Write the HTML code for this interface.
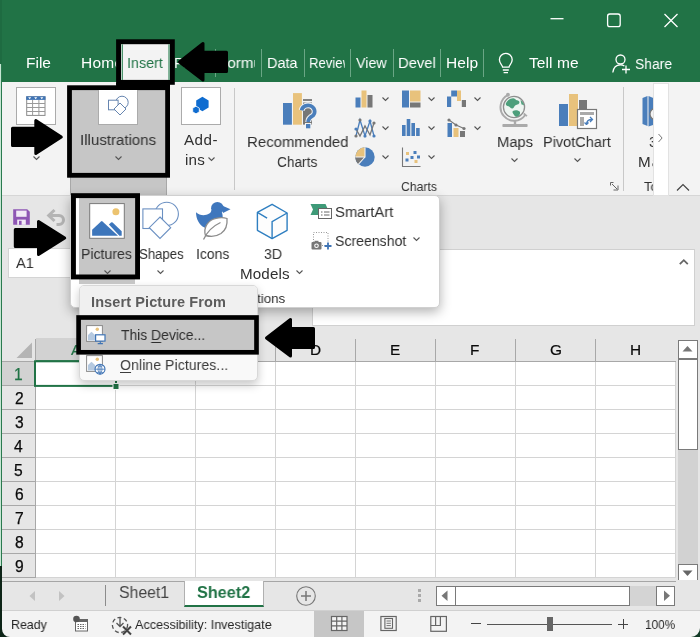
<!DOCTYPE html>
<html lang="en">
<head>
<meta charset="utf-8">
<title>Excel - Insert Picture From This Device</title>
<style>
html,body{margin:0;padding:0;}
body{width:700px;height:637px;overflow:hidden;background:#e6e6e6;font-family:"Liberation Sans",sans-serif;}
#app{position:relative;width:700px;height:637px;overflow:hidden;background:#e6e6e6;}
span.t{will-change:transform;transform-origin:0 0;}
#app div,#app span,#app svg{position:absolute;box-sizing:border-box;}
span.t{white-space:nowrap;display:block;}
span.t u{text-decoration:underline;text-underline-offset:2px;text-decoration-thickness:1px;}
.r{background:#000;}
.ibox{background:#fff;border:1px solid #ababab;}
.hl{background:#c6c6c6;border:5px solid #000;}
.sb{background:#fff;border:1px solid #7a7a7a;}
</style>
</head>
<body>

<div id="app">
<!-- title bar + tab row -->
<div style="left:0;top:0;width:700px;height:82px;background:#217346;"></div>
<!-- window buttons -->
<svg style="left:540px;top:6px" width="150" height="28" viewBox="0 0 150 28">
  <path d="M10.5 12.7h13" stroke="#fff" stroke-width="1.3" fill="none"/>
  <rect x="67.6" y="8" width="12.6" height="12.6" rx="2.2" fill="none" stroke="#fff" stroke-width="1.3"/>
  <path d="M124.5 8l13 13M137.500 8l-13 13" stroke="#fff" stroke-width="1.3" fill="none"/>
</svg>
<!-- tab separators -->
<div style="left:215px;top:48.500px;width:1px;height:28px;background:#6aa685;"></div>
<div style="left:261px;top:48.500px;width:1px;height:28px;background:#6aa685;"></div>
<div style="left:304.2px;top:48.500px;width:1px;height:28px;background:#6aa685;"></div>
<div style="left:350px;top:48.500px;width:1px;height:28px;background:#6aa685;"></div>
<div style="left:392.7px;top:48.500px;width:1px;height:28px;background:#6aa685;"></div>
<div style="left:440.2px;top:48.500px;width:1px;height:28px;background:#6aa685;"></div>
<div style="left:483.1px;top:48.500px;width:1px;height:28px;background:#6aa685;"></div>
<!-- lightbulb -->
<svg style="left:496px;top:51px" width="20" height="24" viewBox="0 0 20 24">
  <path d="M6.6 16.2c0-2.2-3.2-3.6-3.2-7.4a6.4 6.400 0 0 1 12.8 0c0 3.800-3.200 5.200-3.200 7.400z" fill="none" stroke="#fff" stroke-width="1.3"/>
  <path d="M6.800 19h6M7.600 21.600h4.400" stroke="#fff" stroke-width="1.3" fill="none"/>
</svg>
<!-- share icon -->
<svg style="left:611px;top:53px" width="22" height="22" viewBox="0 0 22 22">
  <circle cx="9.500" cy="6.500" r="4.500" fill="none" stroke="#fff" stroke-width="1.300"/>
  <path d="M1.800 19.500c0.600-4.800 3.800-7.600 7.700-7.600 1.500 0 2.800 0.400 3.900 1.100" fill="none" stroke="#fff" stroke-width="1.300"/>
  <path d="M15 12.500v8M11 16.500h8" stroke="#fff" stroke-width="1.300" fill="none"/>
</svg>

<!-- ribbon -->
<div style="left:0;top:82px;width:700px;height:114px;background:#f3f3f3;border-bottom:1px solid #d6d6d6;"></div>
<!-- table icon box -->
<div class="ibox" style="left:16px;top:87px;width:40px;height:38px;"></div>
<svg style="left:25px;top:95px" width="22" height="22" viewBox="0 0 22 22">
  <rect x="1.700" y="1.800" width="18.300" height="18.600" fill="#fff" stroke="#8a8a8a" stroke-width="1"/>
  <rect x="1.200" y="1.300" width="19.300" height="3.600" fill="#3f74b5"/>
  <path d="M1.700 8.500h18.300M1.700 12.500h18.300M1.700 16.500h18.300M7.600 5v15.400M13.900 5v15.400" stroke="#9a9a9a" stroke-width="1" fill="none"/>
  <path d="M3.200 2.300h3l-1.500 1.900zM9.200 2.300h3l-1.500 1.900zM15.300 2.300h3l-1.500 1.900z" fill="#fff"/>
</svg>
<svg style="left:32px;top:155px" width="9" height="6" viewBox="0 0 9 6"><path d="M1.500 1.500l3 3 3-3" fill="none" stroke="#555" stroke-width="1.100"/></svg>
<!-- add-ins box -->
<div class="ibox" style="left:181px;top:87px;width:40px;height:38px;"></div>
<svg style="left:190px;top:95px" width="22" height="22" viewBox="0 0 22 22">
  <path d="M12.400 1.800L18.600 5.400V12.600L12.400 16.200L6.200 12.600V5.400z" fill="#0f6cd0"/>
  <path d="M6 11.200L9.300 13.100V16.900L6 18.800L2.700 16.900V13.100z" fill="#0f6cd0" stroke="#fff" stroke-width="0.800"/>
</svg>
<svg style="left:207px;top:156px" width="9" height="6" viewBox="0 0 9 6"><path d="M1.500 1.500l3 3 3-3" fill="none" stroke="#555" stroke-width="1.100"/></svg>
<!-- ribbon separators -->
<div style="left:234px;top:88px;width:1px;height:102px;background:#c8c8c8;"></div>
<div style="left:623px;top:87px;width:1px;height:104px;background:#c8c8c8;"></div>
<!-- recommended charts icon -->
<svg style="left:281px;top:91px" width="40" height="40" viewBox="0 0 40 40">
  <rect x="2" y="12" width="8.900" height="21.700" fill="#4a7ebb"/>
  <rect x="12" y="2.100" width="8.900" height="31.600" fill="#e8c27c"/>
  <rect x="22" y="8.100" width="9" height="25.500" fill="#777"/>
  <rect x="22" y="9.900" width="9" height="1.600" fill="#f3f3f3"/>
  <path d="M20.600 19.300A6.600 6.200 0 1 1 32.300 24.300Q27.200 27 27.200 31" fill="none" stroke="#f3f3f3" stroke-width="5.800"/>
  <rect x="24" y="32" width="6.300" height="6.300" fill="#f3f3f3"/>
  <path d="M20.600 19.300A6.600 6.200 0 1 1 32.300 24.300Q27.200 27 27.200 31" fill="none" stroke="#4a7ebb" stroke-width="3.700"/>
  <rect x="25" y="33" width="4.300" height="4.300" fill="#4a7ebb"/>
</svg>
<!-- chart small icons col 1 -->
<svg style="left:354px;top:89px" width="22" height="20" viewBox="0 0 22 20">
  <rect x="1.500" y="8.500" width="5" height="10" fill="#4a7ebb"/><rect x="7.500" y="1.500" width="5" height="17" fill="#e8c27c"/><rect x="13.500" y="6" width="5" height="12.500" fill="#777"/>
</svg>
<svg style="left:353px;top:117px" width="24" height="22" viewBox="0 0 24 22">
  <path d="M3 19l4-16 5 16 5-15 4 15" fill="none" stroke="#4a7ebb" stroke-width="1.300"/>
  <path d="M3 12l4 7 5-10 5 9 4-12" fill="none" stroke="#777" stroke-width="1.300"/>
  <circle cx="3" cy="19" r="1.600" fill="#777"/><circle cx="7" cy="3" r="1.600" fill="#777"/><circle cx="12" cy="19" r="1.600" fill="#4a7ebb"/><circle cx="17" cy="4" r="1.600" fill="#4a7ebb"/><circle cx="21" cy="19" r="1.600" fill="#4a7ebb"/><circle cx="21" cy="6" r="1.600" fill="#777"/><circle cx="3" cy="12" r="1.600" fill="#4a7ebb"/>
</svg>
<svg style="left:354px;top:146px" width="22" height="22" viewBox="0 0 22 22">
  <circle cx="11" cy="11" r="9.700" fill="#4a7ebb"/>
  <path d="M11 11V1.300A9.700 9.700 0 0 0 1.300 11z" fill="#e8c27c"/>
  <path d="M11 11H1.300a9.700 9.700 0 0 0 3.200 7.200z" fill="#777"/>
  <path d="M11 1.300V11H1.300M11 11l-6.500 7.200" stroke="#f3f3f3" stroke-width="1.100" fill="none"/>
</svg>
<!-- col 2 -->
<svg style="left:401px;top:89px" width="22" height="20" viewBox="0 0 22 20">
  <rect x="1" y="1.500" width="7" height="17" fill="#4a7ebb"/><rect x="9" y="1.500" width="10.500" height="11" fill="#e8c27c"/><rect x="9" y="13.500" width="10.500" height="5" fill="#777"/>
</svg>
<svg style="left:401px;top:117px" width="22" height="20" viewBox="0 0 22 20">
  <rect x="1" y="8" width="3.600" height="11" fill="#4a7ebb"/><rect x="5.700" y="2" width="3.600" height="17" fill="#4a7ebb"/><rect x="10.400" y="6" width="3.600" height="13" fill="#4a7ebb"/><rect x="15.100" y="11" width="3.600" height="8" fill="#4a7ebb"/>
</svg>
<svg style="left:401px;top:146px" width="22" height="22" viewBox="0 0 22 22">
  <path d="M1.500 1.500v19h18" fill="none" stroke="#777" stroke-width="1.100"/>
  <rect x="5" y="6" width="3" height="3" fill="#e8c27c"/><rect x="12.500" y="5" width="3" height="3" fill="#4a7ebb"/><rect x="4.500" y="12.500" width="3" height="3" fill="#4a7ebb"/><rect x="9.500" y="10" width="3" height="3" fill="#4a7ebb"/><rect x="13.500" y="14" width="3" height="3" fill="#e8c27c"/><rect x="16" y="9.500" width="3" height="3" fill="#4a7ebb"/>
</svg>
<!-- col 3 -->
<svg style="left:446px;top:89px" width="22" height="20" viewBox="0 0 22 20">
  <path d="M1 7.400h4.200V1.500h5.800v5.900h-5.800v10.600H1z" fill="#4a7ebb"/><rect x="11" y="1.500" width="4" height="10.500" fill="#e8c27c"/><rect x="15.800" y="11" width="4.200" height="7" fill="#777"/>
</svg>
<svg style="left:446px;top:117px" width="22" height="22" viewBox="0 0 22 22">
  <rect x="1.500" y="6" width="4.500" height="14" fill="#4a7ebb"/><rect x="7.500" y="11" width="5" height="9" fill="#e8c27c"/><rect x="14" y="14" width="5" height="6" fill="#777"/>
  <path d="M3 3l7 5 8 3.500" fill="none" stroke="#777" stroke-width="1.100"/><circle cx="3" cy="3" r="1.600" fill="#777"/><circle cx="10" cy="8" r="1.600" fill="#777"/><circle cx="18" cy="11.500" r="1.600" fill="#777"/>
</svg>
<!-- chart chevrons -->
<svg style="left:381px;top:96px" width="9" height="6" viewBox="0 0 9 6"><path d="M1.500 1.500l3 3 3-3" fill="none" stroke="#555" stroke-width="1.100"/></svg>
<svg style="left:381px;top:125px" width="9" height="6" viewBox="0 0 9 6"><path d="M1.500 1.500l3 3 3-3" fill="none" stroke="#555" stroke-width="1.100"/></svg>
<svg style="left:381px;top:154px" width="9" height="6" viewBox="0 0 9 6"><path d="M1.500 1.500l3 3 3-3" fill="none" stroke="#555" stroke-width="1.100"/></svg>
<svg style="left:427px;top:96px" width="9" height="6" viewBox="0 0 9 6"><path d="M1.500 1.500l3 3 3-3" fill="none" stroke="#555" stroke-width="1.100"/></svg>
<svg style="left:427px;top:125px" width="9" height="6" viewBox="0 0 9 6"><path d="M1.500 1.500l3 3 3-3" fill="none" stroke="#555" stroke-width="1.100"/></svg>
<svg style="left:427px;top:154px" width="9" height="6" viewBox="0 0 9 6"><path d="M1.500 1.500l3 3 3-3" fill="none" stroke="#555" stroke-width="1.100"/></svg>
<svg style="left:473px;top:96px" width="9" height="6" viewBox="0 0 9 6"><path d="M1.500 1.500l3 3 3-3" fill="none" stroke="#555" stroke-width="1.100"/></svg>
<svg style="left:473px;top:125px" width="9" height="6" viewBox="0 0 9 6"><path d="M1.500 1.500l3 3 3-3" fill="none" stroke="#555" stroke-width="1.100"/></svg>
<!-- maps -->
<svg style="left:498px;top:90px" width="32" height="40" viewBox="0 0 32 40">
  <g transform="translate(16 17) scale(1.080) translate(-16 -16)">
  <circle cx="16" cy="16" r="9.800" fill="#eef5f1" stroke="#8f8f8f" stroke-width="1.200"/>
  <path d="M8.500 12.500C10 9.500 13 7.600 15.500 7.800C17.500 8 17.200 9.600 18.800 9.800C20.500 10 21.500 11 20.800 12.500C20 14 18.200 13.600 17 14.600C15.800 15.600 16.200 17.200 14.600 17.400C12.600 17.600 12.400 15.400 10.800 15.200C9.400 15 8 14.200 8.500 12.500z" fill="#4d9f7b"/>
  <path d="M15 19.600C16.800 18.600 19.600 18.800 21 20C22.200 21.200 21.600 23.200 20.200 24.400C19 25.400 17.400 25.200 16.600 24C15.800 22.800 13.800 20.600 15 19.600z" fill="#4d9f7b"/>
  <path d="M22 9.500C23.500 10.500 24.800 12.300 25.300 14.200L23 13.800z" fill="#4d9f7b"/>
  <path d="M10.600 4.800A12.600 12.600 0 1 0 26.400 23.400" fill="none" stroke="#aaaaaa" stroke-width="1.800"/>
  <circle cx="10.400" cy="4.600" r="1.800" fill="#aaaaaa"/>
  <path d="M25 22l3 2.400" stroke="#aaaaaa" stroke-width="1.600" fill="none"/>
  </g>
  <path d="M17 30v4.500" stroke="#aaaaaa" stroke-width="2.400"/>
  <rect x="4.400" y="34" width="25.200" height="3" rx="0.800" fill="#aaaaaa"/>
</svg>
<svg style="left:510px;top:157px" width="9" height="6" viewBox="0 0 9 6"><path d="M1.500 1.500l3 3 3-3" fill="none" stroke="#555" stroke-width="1.100"/></svg>
<!-- pivotchart -->
<svg style="left:557px;top:91px" width="42" height="40" viewBox="0 0 42 40">
  <rect x="2" y="13" width="9" height="22" fill="#4a7ebb"/>
  <rect x="12" y="3" width="9" height="32" fill="#e8c27c"/>
  <rect x="22" y="9" width="8" height="10" fill="#777"/>
  <rect x="20.500" y="18.500" width="19" height="19" fill="#fff" stroke="#777" stroke-width="1.200"/>
  <rect x="23" y="21" width="14" height="3" fill="#aaa"/>
  <rect x="23" y="26" width="4" height="9" fill="#aaa"/>
  <path d="M29.500 33.500c0-3 2-5 5.500-5M33 26l2.500 2.500L33 31M29.500 33.500l-2 -2M29.500 33.500l2-2" fill="none" stroke="#4a7ebb" stroke-width="1.300"/>
</svg>
<svg style="left:573px;top:157px" width="9" height="6" viewBox="0 0 9 6"><path d="M1.500 1.500l3 3 3-3" fill="none" stroke="#555" stroke-width="1.100"/></svg>
<!-- dialog launcher -->
<svg style="left:609px;top:181px" width="11" height="11" viewBox="0 0 11 11">
  <path d="M1.500 4.500v-3h3M3 3l5 5M9 4.500v4.500h-4.500" fill="none" stroke="#666" stroke-width="1"/>
</svg>
<!-- 3D map icon (clipped) -->
<svg style="left:640px;top:95px" width="16" height="34" viewBox="0 0 16 34">
  <path d="M2.500 3l5-2v30l-5-2z" fill="#4a7ebb"/><path d="M8.500 1l6 2.500v26l-6 2z" fill="#4a7ebb"/>
  <circle cx="16" cy="19" r="6" fill="#f3f3f3" stroke="#777" stroke-width="1.200"/>
</svg>
<!-- QAT icons -->
<svg style="left:12px;top:208px" width="19" height="18" viewBox="0 0 19 18">
  <path d="M1.200 1.200h14l2.600 2.600v13h-16.600z" fill="#8e56b4"/>
  <rect x="4.200" y="2.600" width="10.400" height="6.200" fill="#f1e9f6"/>
  <rect x="5.200" y="11.600" width="8.600" height="5.200" fill="#f1e9f6"/>
  <rect x="7" y="12.800" width="2.600" height="4" fill="#8e56b4"/>
</svg>
<svg style="left:46px;top:208px" width="22" height="18" viewBox="0 0 22 18">
  <path d="M3.500 7.500h9.500a4.500 4.500 0 0 1 0 9h-2.500" fill="none" stroke="#b4b4b4" stroke-width="3"/>
  <path d="M8.500 2l-5.800 5.500 5.800 5.500" fill="none" stroke="#b4b4b4" stroke-width="3"/>
</svg>
<!-- name box -->
<div style="left:8.300px;top:248.300px;width:62.500px;height:29.500px;background:#fff;border:1px solid #d4d4d4;"></div>
<!-- formula bar -->
<div style="left:312px;top:249px;width:383px;height:77px;background:#fff;border:1px solid #d0d0d0;"></div>
<svg style="left:678px;top:257px" width="12" height="10" viewBox="0 0 12 10"><path d="M1.800 7.200l4-4 4 4" fill="none" stroke="#666" stroke-width="1.800"/></svg>

<!-- grid -->
<div style="left:35px;top:361px;width:641px;height:217px;background:#fff;"></div>
<svg style="left:0;top:338px" width="700" height="244" viewBox="0 0 700 244">
  <!-- selected row / col header shading -->
  <rect x="2" y="24" width="33" height="23.500" fill="#d2d2d2"/>
  <rect x="36" y="0" width="79.500" height="23" fill="#d2d2d2"/>
  <g stroke="#d4d4d4" stroke-width="1" fill="none">
    <path d="M675.500 24v216M115.500 24v216M195.500 24v216M275.500 24v216M355.500 24v216M435.500 24v216M515.500 24v216M595.500 24v216"/>
    <path d="M36 47.500h639M36 71.500h639M36 95.500h639M36 119.500h639M36 143.500h639M36 167.500h639M36 191.500h639M36 215.500h639M36 239.500h639"/>
  </g>
  <g stroke="#a8a8a8" stroke-width="1" fill="none">
    <path d="M115.500 1v22M195.500 1v22M275.500 1v22M355.500 1v22M435.500 1v22M515.500 1v22M595.500 1v22"/>
    <path d="M35.500 1v239"/>
    <path d="M2 23.500h674"/>
    <path d="M2 47.500h33M2 71.500h33M2 95.500h33M2 119.500h33M2 143.500h33M2 167.500h33M2 191.500h33M2 215.500h33M2 239.500h33"/>
  </g>
  <path d="M35 24v24" stroke="#217346" stroke-width="1.600" fill="none"/>
  <path d="M36 23h80" stroke="#217346" stroke-width="1.600" fill="none"/>
  <!-- select all triangle -->
  <path d="M32 4.500v15.500h-15.500z" fill="#b4b4b4"/>
  <!-- selection -->
  <rect x="35" y="23.300" width="81" height="24.600" fill="#fff" stroke="#217346" stroke-width="2"/>
  <rect x="113" y="45.500" width="6" height="6" fill="#217346" stroke="#fff" stroke-width="1"/>
</svg>
<!-- vertical scrollbar -->
<div style="left:676px;top:339px;width:24px;height:243px;background:#e6e6e6;"></div>
<div style="left:678px;top:359px;width:19.500px;height:205px;background:#d2d2d2;"></div>
<div class="sb" style="left:678px;top:340px;width:19.500px;height:19px;"></div>
<div class="sb" style="left:678px;top:358.500px;width:19.500px;height:91px;"></div>
<div class="sb" style="left:678px;top:563.500px;width:19.500px;height:18.500px;"></div>
<svg style="left:682px;top:345.300px" width="11" height="7" viewBox="0 0 11 7"><path d="M0.500 6.500l5-5.500 5 5.500z" fill="#777"/></svg>
<svg style="left:682px;top:570px" width="11" height="7" viewBox="0 0 11 7"><path d="M0.500 0.500l5 5.500 5-5.500z" fill="#666"/></svg>

<!-- sheet tab bar -->
<div style="left:0;top:580.500px;width:700px;height:30px;background:#e6e6e6;border-top:1px solid #a6a6a6;"></div>
<div style="left:676px;top:580px;width:24px;height:2px;background:#e6e6e6;"></div>
<svg style="left:28px;top:589px" width="40" height="14" viewBox="0 0 40 14">
  <path d="M7 2v10l-5.500-5zM31 2v10l5.500-5z" fill="#c2c2c2"/>
</svg>
<div style="left:105px;top:585px;width:1px;height:21px;background:#8c8c8c;"></div>
<div style="left:184px;top:581px;width:80px;height:26px;background:#fff;border-left:1px solid #b0b0b0;border-right:1px solid #b0b0b0;border-bottom:2px solid #217346;"></div>
<svg style="left:295px;top:585px" width="22" height="22" viewBox="0 0 22 22">
  <circle cx="11" cy="11" r="9.300" fill="none" stroke="#777" stroke-width="1.100"/>
  <path d="M6 11h10M11 6v10" stroke="#777" stroke-width="1.500" fill="none"/>
</svg>
<!-- horizontal scrollbar -->
<svg style="left:416px;top:588px" width="6" height="16" viewBox="0 0 6 16"><rect x="2" y="1" width="3" height="3" fill="#aaa"/><rect x="2" y="6" width="3" height="3" fill="#aaa"/><rect x="2" y="11" width="3" height="3" fill="#aaa"/></svg>
<div style="left:436px;top:586px;width:239px;height:20px;background:#d4d4d4;"></div>
<div class="sb" style="left:436px;top:586px;width:20px;height:20px;"></div>
<div class="sb" style="left:455px;top:586px;width:175px;height:20px;"></div>
<div class="sb" style="left:656px;top:586px;width:19px;height:20px;"></div>
<svg style="left:441px;top:590px" width="8" height="12" viewBox="0 0 8 12"><path d="M6.500 0.500v10.500l-6-5.200z" fill="#777"/></svg>
<svg style="left:663px;top:590px" width="8" height="12" viewBox="0 0 8 12"><path d="M1 0.500v10.500l6-5.200z" fill="#777"/></svg>

<!-- status bar -->
<div style="left:0;top:610px;width:700px;height:27px;background:#f3f3f3;border-top:1px solid #d0d0d0;"></div>
<div style="left:314px;top:611px;width:50px;height:26px;background:#c6c6c6;"></div>
<svg style="left:72px;top:615px" width="18" height="18" viewBox="0 0 18 18">
  <rect x="3.500" y="4.500" width="12" height="11.500" fill="#fff" stroke="#666" stroke-width="1"/>
  <rect x="3" y="4" width="13" height="3" fill="#666"/>
  <path d="M5.500 9.500h8M5.500 11.500h8M5.500 13.500h8" stroke="#666" stroke-width="1" stroke-dasharray="1.500 1" fill="none"/>
  <circle cx="4.500" cy="4" r="3.300" fill="#555"/>
</svg>
<svg style="left:110px;top:614px" width="24" height="22" viewBox="0 0 24 22">
  <circle cx="10" cy="11" r="7.600" fill="none" stroke="#555" stroke-width="1.300" stroke-dasharray="4 2.600"/>
  <path d="M10 3v9M6.500 9l3.500 3.500 3.500-3.500" fill="none" stroke="#555" stroke-width="1.300"/>
  <path d="M13 12.500l8 8M21 12.500l-8 8" stroke="#444" stroke-width="2" fill="none"/>
</svg>
<svg style="left:330px;top:615px" width="19" height="17" viewBox="0 0 19 17">
  <rect x="1.500" y="1.500" width="15.500" height="14" fill="#f3f3f3" stroke="#666" stroke-width="1.200"/>
  <path d="M1.500 6.200h15.500M1.500 10.800h15.500M6.700 1.500v14M11.900 1.500v14" stroke="#666" stroke-width="1.200" fill="none"/>
</svg>
<svg style="left:379px;top:615px" width="19" height="17" viewBox="0 0 19 17">
  <rect x="1.900" y="1.500" width="15.300" height="14" fill="none" stroke="#666" stroke-width="1.200"/>
  <rect x="5.900" y="3.500" width="7.600" height="9.800" fill="none" stroke="#666" stroke-width="1.100"/>
  <path d="M7.500 6h4.400M7.500 8.300h4.400M7.500 10.600h4.400" stroke="#666" stroke-width="0.900" fill="none"/>
</svg>
<svg style="left:429px;top:615px" width="19" height="18" viewBox="0 0 19 18">
  <rect x="1.800" y="1.500" width="15.600" height="14.800" fill="none" stroke="#666" stroke-width="1.200"/>
  <path d="M6.600 1.500v9h4.800v-9M1.800 10.500h4.800" stroke="#666" stroke-width="1.200" fill="none"/>
</svg>
<div style="left:471px;top:623px;width:10px;height:1px;background:#444;"></div>
<div style="left:487px;top:624px;width:125px;height:1px;background:#555;"></div>
<div style="left:547px;top:617px;width:6px;height:14px;background:#666;"></div>
<div style="left:618px;top:623.500px;width:10px;height:1px;background:#444;"></div>
<div style="left:622.500px;top:619px;width:1px;height:10px;background:#444;"></div>

<!-- left window edge -->
<div style="left:0;top:64px;width:1.500px;height:503px;background:#c6e6d3;"></div>
<div style="left:0;top:0;width:2px;height:64px;background:#1e6b41;"></div>
<div style="left:1.400px;top:64px;width:1px;height:573px;background:#2a7a4f;"></div>
<div style="left:0;top:566px;width:2px;height:71px;background:#0d2417;"></div>
<svg style="left:0;top:617px" width="700" height="20" viewBox="0 0 700 20"><path d="M0 0H2V12A8 8 0 0 0 10 20H0z" fill="#0d2417"/><path d="M700 11A9 9 0 0 1 691 20H700z" fill="#123a26"/></svg>

<!-- illustrations dropdown (under Illustrations button) -->
<div style="left:70px;top:177px;width:96.500px;height:19px;background:#c6c6c6;border-left:1px solid #a8a8a8;border-right:1px solid #a8a8a8;"></div>
<div style="left:69.500px;top:195px;width:370px;height:112.500px;background:#fff;border:1px solid #d0d0d0;border-radius:0 5px 5px 5px;box-shadow:0 4px 12px rgba(0,0,0,0.30);"></div>
<!-- shapes icon -->
<svg style="left:141px;top:200px" width="40" height="40" viewBox="0 0 40 40">
  <circle cx="25.700" cy="13.900" r="11.700" fill="#fff" stroke="#6b90c2" stroke-width="1.100"/>
  <rect x="1.900" y="8.900" width="19.600" height="19.600" fill="#fff" stroke="#6b90c2" stroke-width="1.100"/>
  <path d="M19 17L29.700 27.700L19 38.400L8.300 27.700z" fill="#fff" stroke="#6b90c2" stroke-width="1.100"/>
</svg>
<svg style="left:156px;top:269px" width="9" height="6" viewBox="0 0 9 6"><path d="M1.500 1.500l3 3 3-3" fill="none" stroke="#555" stroke-width="1.100"/></svg>
<!-- icons (duck + leaf) -->
<svg style="left:194px;top:200px" width="38" height="42" viewBox="0 0 38 42">
  <path d="M2 12.200C5.500 15.600 11 16.200 15.200 13.600C16.400 12.800 17.200 11.600 17.400 10.200L28 12.800C29.500 17 28.600 22 25.500 25.500C22 29.200 15.500 30 10.500 27.500C5 24.800 2 18.500 2 12.200z" fill="#3f77bd"/>
  <circle cx="23.400" cy="8.200" r="6.300" fill="#3f77bd"/>
  <path d="M28.500 5.800L36.500 9.200L29 13z" fill="#3f77bd"/>
  <path d="M11.500 35.500C9 27.500 14 20 22 18.300C26 17.400 30 17.500 33 18.500C33.500 24 32 30 27 33.500C22.500 36.500 16 36.700 11.500 35.500z" fill="#fff" stroke="#8c8c8c" stroke-width="1.300"/>
  <path d="M9.500 39.500C13 32 19 26 26.500 22.500" fill="none" stroke="#8c8c8c" stroke-width="1.300"/>
</svg>
<!-- 3D models cube -->
<svg style="left:255px;top:202px" width="36" height="40" viewBox="0 0 36 40">
  <path d="M17.100 2.300L32.100 11L32.100 28.300L17.100 36.600L2.400 28.300L2.400 10.400z" fill="#fdfdfd" stroke="#2f7fc1" stroke-width="1.400" stroke-linejoin="round"/>
  <path d="M2.400 10.400L12.100 16.100M32.100 11L17.100 19.700V36.600" fill="none" stroke="#2f7fc1" stroke-width="1.400"/>
</svg>
<svg style="left:295px;top:269px" width="9" height="6" viewBox="0 0 9 6"><path d="M1.500 1.500l3 3 3-3" fill="none" stroke="#555" stroke-width="1.100"/></svg>
<!-- smartart -->
<svg style="left:309px;top:202px" width="24" height="18" viewBox="0 0 24 18">
  <path d="M1.500 2h15l2.500 5.500-2.500 5.500h-15l2.500-5.500z" fill="#3e9a78"/>
  <rect x="9.500" y="6.500" width="13" height="10" fill="#fff" stroke="#666" stroke-width="1"/>
  <path d="M12 10h1.500M15 10h5.500M12 13h1.500M15 13h5.500" stroke="#666" stroke-width="1" fill="none"/>
</svg>
<!-- screenshot -->
<svg style="left:310px;top:230px" width="24" height="22" viewBox="0 0 24 22">
  <rect x="3.500" y="2.500" width="14.500" height="13" fill="none" stroke="#999" stroke-width="1" stroke-dasharray="1 1.500"/>
  <rect x="1.500" y="12" width="10" height="7.500" rx="1" fill="#777"/>
  <rect x="4.500" y="10.800" width="4" height="2" fill="#777"/>
  <circle cx="6.500" cy="15.800" r="2.300" fill="#fff"/><circle cx="6.500" cy="15.800" r="1.200" fill="#777"/>
  <path d="M18 12.500v7M14.500 16h7" stroke="#3f74b5" stroke-width="1.800" fill="none"/>
</svg>
<svg style="left:412px;top:236px" width="9" height="6" viewBox="0 0 9 6"><path d="M1.500 1.500l3 3 3-3" fill="none" stroke="#555" stroke-width="1.100"/></svg>

<!-- labels -->
<span class="t" style="left:26.02px;top:55.38px;font-size:15.5px;line-height:15.5px;color:#ffffff;transform:scaleX(0.9848);">File</span>
<span class="t" style="left:81.00px;top:55.38px;font-size:15.5px;line-height:15.5px;color:#ffffff;letter-spacing:0.258px;">Home</span>
<span class="t" style="left:174.07px;top:55.38px;font-size:15.5px;line-height:15.5px;color:#ffffff;transform:scaleX(0.9254);width:40.98px;overflow:hidden;">Page Layout</span>
<span class="t" style="left:218.32px;top:55.38px;font-size:15.5px;line-height:15.5px;color:#ffffff;transform:scaleX(0.9810);width:38.41px;overflow:hidden;">Formulas</span>
<span class="t" style="left:266.97px;top:55.38px;font-size:15.5px;line-height:15.5px;color:#ffffff;transform:scaleX(0.9340);">Data</span>
<span class="t" style="left:308.75px;top:55.38px;font-size:15.5px;line-height:15.5px;color:#ffffff;transform:scaleX(0.8472);width:42.78px;overflow:hidden;">Review</span>
<span class="t" style="left:356.00px;top:55.38px;font-size:15.5px;line-height:15.5px;color:#ffffff;transform:scaleX(0.9231);">View</span>
<span class="t" style="left:398.05px;top:55.38px;font-size:15.5px;line-height:15.5px;color:#ffffff;transform:scaleX(0.9533);width:39.81px;overflow:hidden;">Developer</span>
<span class="t" style="left:445.50px;top:55.38px;font-size:15.5px;line-height:15.5px;color:#ffffff;letter-spacing:0.081px;">Help</span>
<span class="t" style="left:529.00px;top:55.38px;font-size:15.5px;line-height:15.5px;color:#ffffff;letter-spacing:0.087px;">Tell me</span>
<span class="t" style="left:635.00px;top:56.38px;font-size:15.5px;line-height:15.5px;color:#ffffff;transform:scaleX(0.8959);">Share</span>
<span class="t" style="left:184.00px;top:132.13px;font-size:15.2px;line-height:15.2px;color:#303030;letter-spacing:0.492px;">Add-</span>
<span class="t" style="left:185.30px;top:152.13px;font-size:15.2px;line-height:15.2px;color:#303030;letter-spacing:0.190px;">ins</span>
<span class="t" style="left:246.71px;top:134.13px;font-size:15.2px;line-height:15.2px;color:#303030;transform:scaleX(0.9858);">Recommended</span>
<span class="t" style="left:277.40px;top:154.13px;font-size:15.2px;line-height:15.2px;color:#303030;transform:scaleX(0.8995);">Charts</span>
<span class="t" style="left:496.53px;top:134.13px;font-size:15.2px;line-height:15.2px;color:#303030;transform:scaleX(0.9714);">Maps</span>
<span class="t" style="left:542.55px;top:134.13px;font-size:15.2px;line-height:15.2px;color:#303030;transform:scaleX(0.9550);">PivotChart</span>
<span class="t" style="left:400.70px;top:179.77px;font-size:13.5px;line-height:13.5px;color:#303030;transform:scaleX(0.9047);">Charts</span>
<span class="t" style="left:648.50px;top:134.13px;font-size:15.2px;line-height:15.2px;color:#303030;transform:scaleX(0.8999);">3D</span>
<span class="t" style="left:637.50px;top:154.13px;font-size:15.2px;line-height:15.2px;color:#303030;letter-spacing:1.201px;">Map</span>
<span class="t" style="left:644.00px;top:179.77px;font-size:13.5px;line-height:13.5px;color:#303030;transform:scaleX(0.9621);">Tours</span>
<span class="t" style="left:139.00px;top:246.13px;font-size:15.2px;line-height:15.2px;color:#303030;transform:scaleX(0.8668);">Shapes</span>
<span class="t" style="left:195.88px;top:246.13px;font-size:15.2px;line-height:15.2px;color:#303030;transform:scaleX(0.9186);">Icons</span>
<span class="t" style="left:264.00px;top:246.13px;font-size:15.2px;line-height:15.2px;color:#303030;transform:scaleX(0.9256);">3D</span>
<span class="t" style="left:240.00px;top:266.13px;font-size:15.2px;line-height:15.2px;color:#303030;letter-spacing:0.127px;">Models</span>
<span class="t" style="left:335.00px;top:204.13px;font-size:15.2px;line-height:15.2px;color:#303030;transform:scaleX(0.9721);">SmartArt</span>
<span class="t" style="left:335.00px;top:232.63px;font-size:15.2px;line-height:15.2px;color:#303030;transform:scaleX(0.9277);">Screenshot</span>
<span class="t" style="left:218.02px;top:291.57px;font-size:13.5px;line-height:13.5px;color:#303030;transform:scaleX(0.9848);">Illustrations</span>
<span class="t" style="left:15.50px;top:255.30px;font-size:15px;line-height:15px;color:#303030;transform:scaleX(0.9720);">A1</span>
<span class="t" style="left:70.70px;top:342.36px;font-size:15.4px;line-height:15.4px;color:#217346;-webkit-text-stroke:0.2px currentColor;">A</span>
<span class="t" style="left:149.50px;top:342.36px;font-size:15.4px;line-height:15.4px;color:#0a0a0a;-webkit-text-stroke:0.2px currentColor;">B</span>
<span class="t" style="left:229.50px;top:342.36px;font-size:15.4px;line-height:15.4px;color:#0a0a0a;-webkit-text-stroke:0.2px currentColor;">C</span>
<span class="t" style="left:309.50px;top:342.36px;font-size:15.4px;line-height:15.4px;color:#0a0a0a;-webkit-text-stroke:0.2px currentColor;">D</span>
<span class="t" style="left:389.50px;top:342.36px;font-size:15.4px;line-height:15.4px;color:#0a0a0a;-webkit-text-stroke:0.2px currentColor;">E</span>
<span class="t" style="left:470.00px;top:342.36px;font-size:15.4px;line-height:15.4px;color:#0a0a0a;-webkit-text-stroke:0.2px currentColor;">F</span>
<span class="t" style="left:549.50px;top:342.36px;font-size:15.4px;line-height:15.4px;color:#0a0a0a;-webkit-text-stroke:0.2px currentColor;">G</span>
<span class="t" style="left:630.00px;top:342.36px;font-size:15.4px;line-height:15.4px;color:#0a0a0a;-webkit-text-stroke:0.2px currentColor;">H</span>
<span class="t" style="left:14.00px;top:367.19px;font-size:15.6px;line-height:15.6px;color:#217346;-webkit-text-stroke:0.25px currentColor;">1</span>
<span class="t" style="left:14.50px;top:391.19px;font-size:15.6px;line-height:15.6px;color:#0a0a0a;-webkit-text-stroke:0.25px currentColor;">2</span>
<span class="t" style="left:14.50px;top:415.19px;font-size:15.6px;line-height:15.6px;color:#0a0a0a;-webkit-text-stroke:0.25px currentColor;">3</span>
<span class="t" style="left:14.00px;top:439.19px;font-size:15.6px;line-height:15.6px;color:#0a0a0a;-webkit-text-stroke:0.25px currentColor;">4</span>
<span class="t" style="left:14.00px;top:463.19px;font-size:15.6px;line-height:15.6px;color:#0a0a0a;-webkit-text-stroke:0.25px currentColor;">5</span>
<span class="t" style="left:14.50px;top:487.19px;font-size:15.6px;line-height:15.6px;color:#0a0a0a;-webkit-text-stroke:0.25px currentColor;">6</span>
<span class="t" style="left:14.50px;top:511.19px;font-size:15.6px;line-height:15.6px;color:#0a0a0a;-webkit-text-stroke:0.25px currentColor;">7</span>
<span class="t" style="left:14.50px;top:535.19px;font-size:15.6px;line-height:15.6px;color:#0a0a0a;-webkit-text-stroke:0.25px currentColor;">8</span>
<span class="t" style="left:14.50px;top:559.19px;font-size:15.6px;line-height:15.6px;color:#0a0a0a;-webkit-text-stroke:0.25px currentColor;">9</span>
<span class="t" style="left:119.00px;top:584.03px;font-size:16.5px;line-height:16.5px;color:#444;transform:scaleX(0.9593);">Sheet1</span>
<span class="t" style="left:197.00px;top:584.03px;font-size:16.5px;line-height:16.5px;color:#217346;font-weight:700;transform:scaleX(0.9827);">Sheet2</span>
<span class="t" style="left:10.65px;top:618.00px;font-size:13px;line-height:13px;color:#262626;transform:scaleX(0.9547);">Ready</span>
<span class="t" style="left:134.50px;top:618.00px;font-size:13px;line-height:13px;color:#262626;transform:scaleX(0.9704);">Accessibility: Investigate</span>
<span class="t" style="left:645.00px;top:618.00px;font-size:13px;line-height:13px;color:#262626;transform:scaleX(0.9053);">100%</span>
<!-- ribbon scroll strip + collapse -->
<div style="left:668px;top:83px;width:32px;height:112px;background:#f3f3f3;"></div>
<div style="left:653px;top:83px;width:15.500px;height:112.500px;background:#fff;border:1px solid #e2e2e2;"></div>
<svg style="left:657px;top:133px" width="7" height="10" viewBox="0 0 7 10"><path d="M1.500 1l3.600 4-3.600 4" fill="none" stroke="#777" stroke-width="1"/></svg>
<svg style="left:676px;top:183px" width="14" height="9" viewBox="0 0 14 9"><path d="M1 7.500l6-6 6 6" fill="none" stroke="#444" stroke-width="1.200"/></svg>

<!-- Insert Picture From menu -->
<div style="left:79.300px;top:284.800px;width:178.300px;height:96.200px;background:#f9f9f9;border:1px solid #d8d8d8;border-radius:5px;box-shadow:0 4px 10px rgba(0,0,0,0.22);overflow:hidden;">
  <div style="left:0;top:0;width:178px;height:30px;background:#f0f0f0;"></div>
</div>
<!-- online pictures icon -->
<svg style="left:85px;top:354px" width="22" height="22" viewBox="0 0 22 22">
  <rect x="1.600" y="1.600" width="15.800" height="15.800" fill="#fff" stroke="#8a8a8a" stroke-width="1"/>
  <path d="M3 16.500v-5.500l3.500-3.200 3.500 3.200v5.500z" fill="#b5c9e0"/>
  <circle cx="12.300" cy="5.300" r="1.700" fill="#e8c27c"/>
  <circle cx="15" cy="15.200" r="5" fill="#fff" stroke="#3f74b5" stroke-width="1.100"/>
  <path d="M10 15.200h10M15 10.200v10M12 11.500c1.800 1 4.200 1 6 0M12 18.900c1.800-1 4.200-1 6 0M15 10.200c-2.600 3-2.600 7 0 10M15 10.200c2.600 3 2.600 7 0 10" fill="none" stroke="#3f74b5" stroke-width="0.800"/>
</svg>

<!-- highlight boxes -->
<div style="left:79.200px;top:196px;width:56.300px;height:88.200px;background:#c6c6c6;"></div>
<svg style="left:0;top:0" width="700" height="637" viewBox="0 0 700 637">
  <rect x="118.550" y="41.750" width="53.800" height="40.600" fill="#f3f3f3" stroke="#000" stroke-width="4.900"/>
  <path d="M122.300 44.200V80M169 44.200V80" stroke="#3a8a5f" stroke-width="1.200" fill="none"/>
  <rect x="69.500" y="87.700" width="98.100" height="87.600" fill="#c6c6c6" stroke="#000" stroke-width="4.800"/>
  <rect x="116.100" y="83" width="53.900" height="4" fill="#000"/>
  <rect x="73.450" y="195.650" width="64.100" height="81.300" fill="none" stroke="#000" stroke-width="4.900"/>
  <rect x="78.600" y="317.500" width="177.900" height="34.800" fill="#c6c6c6" stroke="#000" stroke-width="4.650"/>
</svg>

<!-- icons inside highlighted buttons -->
<div class="ibox" style="left:98px;top:90px;width:40px;height:35px;border-top:none;"></div>
<svg style="left:105px;top:94px" width="26" height="26" viewBox="0 0 26 26">
  <circle cx="17" cy="8.400" r="6.200" fill="#fff" stroke="#6685b0" stroke-width="1"/>
  <rect x="3.500" y="6.200" width="9.600" height="9.600" fill="#fff" stroke="#6685b0" stroke-width="1"/>
  <path d="M15 9L21 15L15 21L9 15z" fill="#fff" stroke="#6685b0" stroke-width="1"/>
</svg>
<svg style="left:114px;top:155px" width="9" height="6" viewBox="0 0 9 6"><path d="M1.500 1.500l3 3 3-3" fill="none" stroke="#555" stroke-width="1.100"/></svg>
<!-- pictures icon -->
<svg style="left:88px;top:202px" width="38" height="38" viewBox="0 0 38 38">
  <rect x="1.700" y="1.600" width="34.600" height="34.700" fill="#fff" stroke="#7a7a7a" stroke-width="1"/>
  <path d="M4.100 27.800L13 19.400Q13.700 18.800 14.500 19.400L30 33.700H4.100z" fill="#3d76bb"/>
  <path d="M20.900 22.400L23 20.500Q23.800 19.900 24.600 20.500L33.700 29.200V33.700H31.400z" fill="#3d76bb"/>
  <circle cx="27.900" cy="9.700" r="3.500" fill="#ecc36f"/>
</svg>
<svg style="left:103px;top:269px" width="9" height="6" viewBox="0 0 9 6"><path d="M1.500 1.500l3 3 3-3" fill="none" stroke="#555" stroke-width="1.100"/></svg>
<!-- this device icon -->
<svg style="left:85px;top:324px" width="22" height="22" viewBox="0 0 22 22">
  <rect x="1.600" y="1.600" width="15.800" height="15.800" fill="#fff" stroke="#8a8a8a" stroke-width="1"/>
  <path d="M3 16.500v-5.500l3.500-3.200 3.500 3.200v5.500z" fill="#b5c9e0"/>
  <circle cx="12.300" cy="5.300" r="1.700" fill="#e8c27c"/>
  <rect x="10.600" y="10.800" width="9.400" height="6.300" fill="#fff" stroke="#3f74b5" stroke-width="1.200"/>
  <path d="M15.300 17.200v2.200M12.700 19.600h5.200" stroke="#3f74b5" stroke-width="1.100" fill="none"/>
</svg>

<!-- arrows -->
<svg style="left:0;top:0" width="700" height="637" viewBox="0 0 700 637">
  <g fill="#000" stroke="#000" stroke-width="3" stroke-linejoin="round">
    <path d="M179.500 62L203 43.500V52.300H226.500V71.500H203V80z"/>
    <path d="M61.300 137L35.800 120.500V128.300H12.500V145.500H35.800V153.500z"/>
    <path d="M64.700 238L38.500 221.500V229.400H15.300V246.400H38.500V254.500z"/>
    <path d="M266.500 338L290.500 319.500V328.500H313.500V347.500H290.500V356z"/>
  </g>
</svg>

<!-- highlighted labels -->
<span class="t" style="left:126.58px;top:55.38px;font-size:15.5px;line-height:15.5px;color:#217346;transform:scaleX(0.9231);">Insert</span>
<span class="t" style="left:79.51px;top:132.13px;font-size:15.2px;line-height:15.2px;color:#303030;transform:scaleX(0.9906);">Illustrations</span>
<span class="t" style="left:81.07px;top:246.13px;font-size:15.2px;line-height:15.2px;color:#303030;transform:scaleX(0.9287);">Pictures</span>
<span class="t" style="left:91.00px;top:295.23px;font-size:14.5px;line-height:14.5px;color:#5c5c5c;font-weight:700;letter-spacing:0.108px;">Insert Picture From</span>
<span class="t" style="left:121.00px;top:327.38px;font-size:15.5px;line-height:15.5px;color:#2e2e2e;transform:scaleX(0.8965);">This <u>D</u>evice...</span>
<span class="t" style="left:120.00px;top:357.38px;font-size:15.5px;line-height:15.5px;color:#3c3c3c;transform:scaleX(0.9168);"><u>O</u>nline Pictures...</span>

</div>
</body>
</html>
